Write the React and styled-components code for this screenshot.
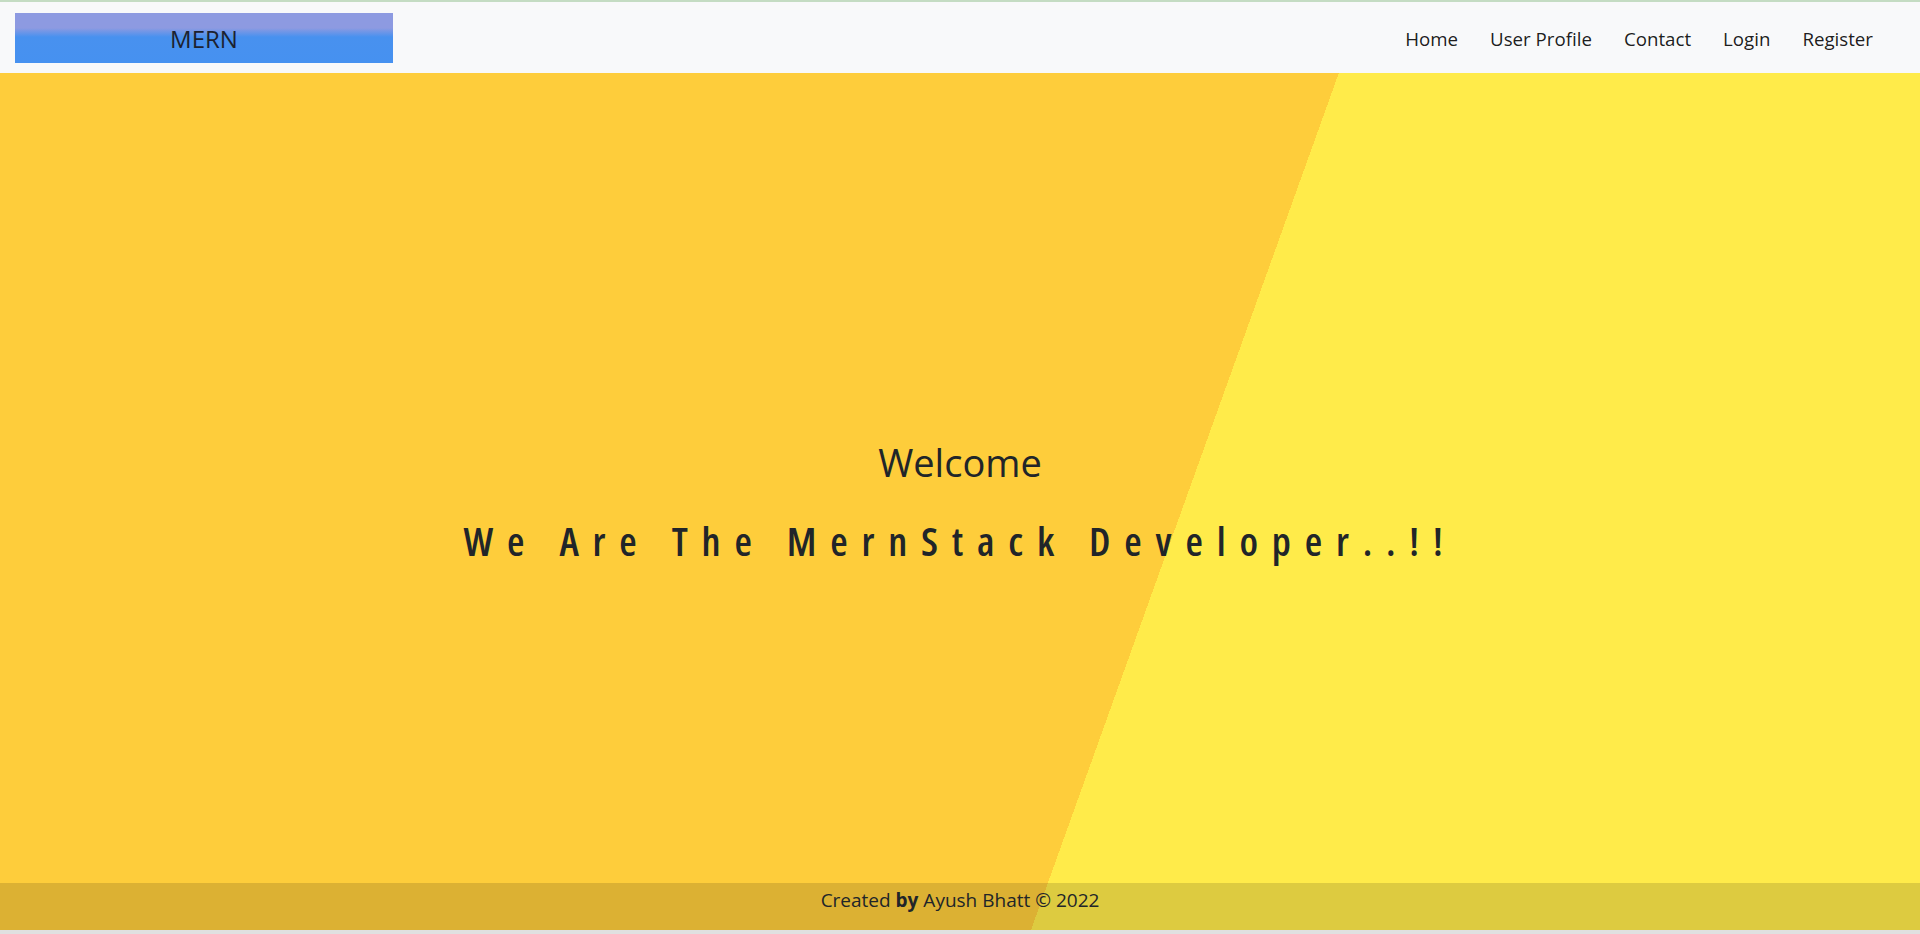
import React from "react";
import styled, { createGlobalStyle } from "styled-components";

const GlobalStyle = createGlobalStyle`
  html, body {
    margin: 0;
    padding: 0;
    overflow: hidden;
  }
  body {
    font-family: "Open Sans", "Noto Sans", sans-serif;
    color: #212529;
  }
  * { box-sizing: border-box; }
`;

const Frame = styled.div`
  display: flex;
  flex-direction: column;
  width: 1920px;
  height: 934px;
  border-top: 2px solid #c4dcc3;
  border-bottom: 4px solid #e0e0e0;
`;

const NavBar = styled.nav`
  height: 71px;
  flex: none;
  display: flex;
  align-items: center;
  justify-content: space-between;
  background: #f8f9fa;
  padding: 0 47px 0 15px;
`;

const Brand = styled.a`
  width: 378px;
  height: 50px;
  display: flex;
  align-items: center;
  justify-content: center;
  background: linear-gradient(
    to bottom,
    #8d9ae1 0%,
    #8d9ae1 30%,
    #4891ef 48%,
    #4691f0 100%
  );
  color: #1c2230;
  font-size: 24px;
  font-weight: 400;
  text-decoration: none;
  padding-top: 2px;
`;

const NavList = styled.ul`
  display: flex;
  align-items: center;
  gap: 32px;
  list-style: none;
  margin: 0;
  padding: 0;
  line-height: 27px;
`;

const NavItem = styled.li`
  padding-top: 3px;
`;

const NavLink = styled.a`
  font-size: 18.7px;
  color: rgba(0, 0, 0, 0.9);
  text-decoration: none;
  line-height: 27px;
`;

const Hero = styled.section`
  position: relative;
  flex: 1;
  display: flex;
  flex-direction: column;
  align-items: center;
  justify-content: center;
  padding-top: 2px;
  background: linear-gradient(109.76deg, #fecd3b 1260px, #ffeb4a 1260px);
`;

const Welcome = styled.p`
  margin: 0 0 31px;
  font-size: 38px;
  line-height: 1.2;
  font-weight: 400;
  color: #212529;
`;

const Tagline = styled.h1`
  margin: 0;
  font-size: 40px;
  line-height: 1.2;
  font-weight: 600;
  font-stretch: 75%;
  letter-spacing: 13.8px;
  color: #212529;
`;

const Footer = styled.footer`
  position: absolute;
  left: 0;
  right: 0;
  bottom: 0;
  height: 47px;
  display: flex;
  justify-content: center;
  align-items: flex-start;
  padding-top: 4px;
  background: rgba(0, 0, 0, 0.135);
  font-size: 19px;
  line-height: 27px;
  color: #212529;
`;

const links = ["Home", "User Profile", "Contact", "Login", "Register"];

export default function App() {
  return (
    <>
      <GlobalStyle />
      <Frame>
        <NavBar>
          <Brand href="#">MERN</Brand>
          <NavList>
            {links.map((l) => (
              <NavItem key={l}>
                <NavLink href="#">{l}</NavLink>
              </NavItem>
            ))}
          </NavList>
        </NavBar>
        <Hero>
          <Welcome>Welcome</Welcome>
          <Tagline>We Are The MernStack Developer..!!</Tagline>
          <Footer>
            <span>
              Created <b>by</b> Ayush Bhatt © 2022
            </span>
          </Footer>
        </Hero>
      </Frame>
    </>
  );
}
